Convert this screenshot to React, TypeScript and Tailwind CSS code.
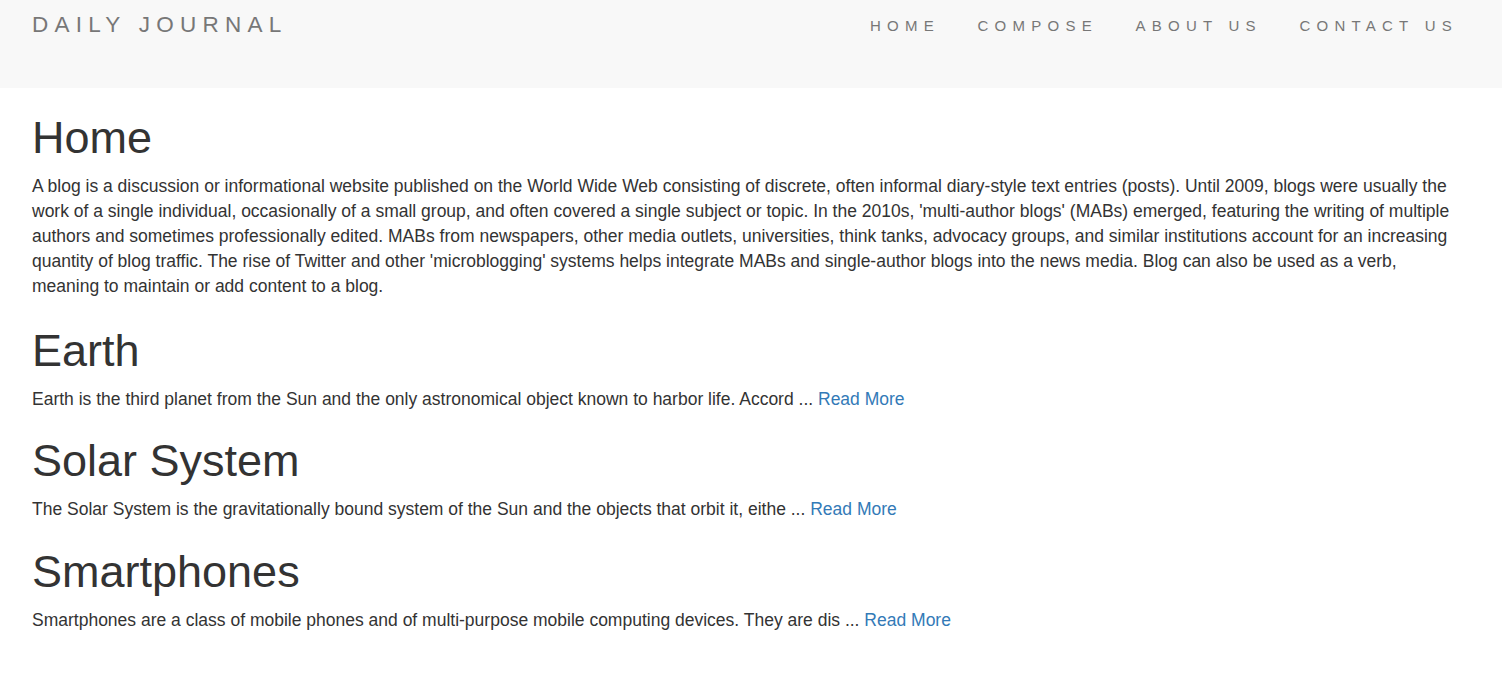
const posts = [
  {
    title: "Earth",
    teaser:
      "Earth is the third planet from the Sun and the only astronomical object known to harbor life. Accord",
  },
  {
    title: "Solar System",
    teaser:
      "The Solar System is the gravitationally bound system of the Sun and the objects that orbit it, eithe",
  },
  {
    title: "Smartphones",
    teaser:
      "Smartphones are a class of mobile phones and of multi-purpose mobile computing devices. They are dis",
  },
];

const links = ["HOME", "COMPOSE", "ABOUT US", "CONTACT US"];

export default function App() {
  return (
    <div className="min-h-screen bg-white font-['Liberation_Sans',Arial,sans-serif] text-[17.5px] leading-[25px] text-[#333]">
      <nav className="flex h-[88px] items-start justify-between bg-[#f8f8f8] pl-[32px] pr-[25.25px]">
        <a
          href="#"
          className="pt-[11.6px] text-[22.5px] leading-[25px] tracking-[6.25px] text-[#777]"
        >
          DAILY JOURNAL
        </a>
        <ul className="flex pt-[12.6px]">
          {links.map((link) => (
            <li key={link}>
              <a
                href="#"
                className="block px-[18.75px] text-[15px] leading-[25px] tracking-[6.25px] text-[#777]"
              >
                {link}
              </a>
            </li>
          ))}
        </ul>
      </nav>

      <main className="pl-[32px] pr-[48px]">
        <h1 className="mt-[25px] mb-[11px] text-[45px] leading-[1.1] font-normal">
          Home
        </h1>
        <p className="mb-[27px]">
          A blog is a discussion or informational website published on the World
          Wide Web consisting of discrete, often informal diary-style text
          entries (posts). Until 2009, blogs were usually the work of a single
          individual, occasionally of a small group, and often covered a single
          subject or topic. In the 2010s, 'multi-author blogs' (MABs) emerged,
          featuring the writing of multiple authors and sometimes professionally
          edited. MABs from newspapers, other media outlets, universities, think
          tanks, advocacy groups, and similar institutions account for an
          increasing quantity of blog traffic. The rise of Twitter and other
          'microblogging' systems helps integrate MABs and single-author blogs
          into the news media. Blog can also be used as a verb, meaning to
          maintain or add content to a blog.
        </p>

        {posts.map((post) => (
          <div key={post.title}>
            <h1 className="mt-[24.5px] mb-[11.5px] text-[45px] leading-[1.1] font-normal">
              {post.title}
            </h1>
            <p className="mb-[12.5px]">
              {post.teaser} ...{" "}
              <a href="#" className="text-[#337ab7]">
                Read More
              </a>
            </p>
          </div>
        ))}
      </main>
    </div>
  );
}
